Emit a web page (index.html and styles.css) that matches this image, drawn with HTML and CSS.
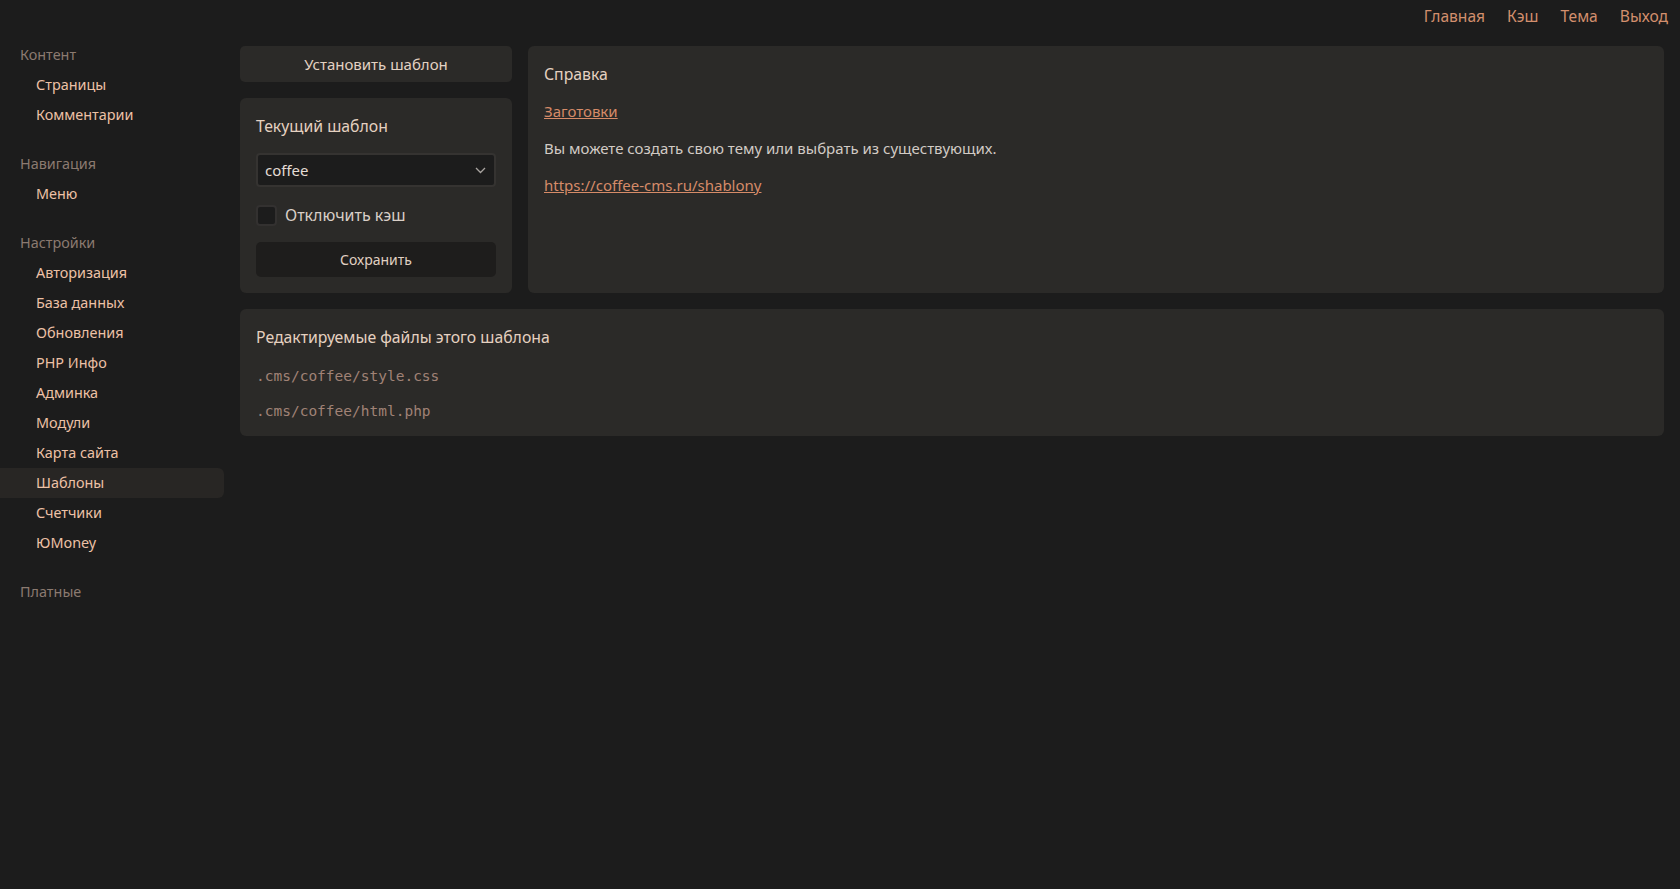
FILE: index.html
```html
<!DOCTYPE html>
<html>
<head>
  <meta charset="utf-8">
  <title>Шаблоны</title>
  <link rel="stylesheet" href="styles.css">
</head>
<body>

  <div class="topbar">
    <a href="#">Главная</a>
    <a href="#">Кэш</a>
    <a href="#">Тема</a>
    <a href="#">Выход</a>
  </div>

  <div class="layout">
    <div class="sidebar">
      <div class="side-group">
        <div class="side-title">Контент</div>
        <a class="side-link" href="#">Страницы</a>
        <a class="side-link" href="#">Комментарии</a>
      </div>
      <div class="side-group">
        <div class="side-title">Навигация</div>
        <a class="side-link" href="#">Меню</a>
      </div>
      <div class="side-group">
        <div class="side-title">Настройки</div>
        <a class="side-link" href="#">Авторизация</a>
        <a class="side-link" href="#">База данных</a>
        <a class="side-link" href="#">Обновления</a>
        <a class="side-link" href="#">PHP Инфо</a>
        <a class="side-link" href="#">Админка</a>
        <a class="side-link" href="#">Модули</a>
        <a class="side-link" href="#">Карта сайта</a>
        <a class="side-link active" href="#">Шаблоны</a>
        <a class="side-link" href="#">Счетчики</a>
        <a class="side-link" href="#">ЮMoney</a>
      </div>
      <div class="side-group">
        <div class="side-title">Платные</div>
      </div>
    </div>

    <div class="content">
      <div class="top-row">
        <div class="left-col">
          <button class="btn btn-install">Установить шаблон</button>
          <div class="card">
            <div class="card-title">Текущий шаблон</div>
            <div class="select-wrap">
              <select class="select">
                <option>coffee</option>
              </select>
              <svg class="chevron" width="11" height="7" viewBox="0 0 11 7">
                <path d="M1 1 L5.5 5.5 L10 1" fill="none" stroke="#a9a4a0" stroke-width="1.3"/>
              </svg>
            </div>
            <label class="check">
              <input type="checkbox">
              <span>Отключить кэш</span>
            </label>
            <button class="btn btn-save">Сохранить</button>
          </div>
        </div>

        <div class="card">
          <div class="card-title">Справка</div>
          <p><a class="link" href="#">Заготовки</a></p>
          <p>Вы можете создать свою тему или выбрать из существующих.</p>
          <p><a class="link" href="#">https://coffee-cms.ru/shablony</a></p>
        </div>
      </div>

      <div class="card files">
        <div class="card-title">Редактируемые файлы этого шаблона</div>
        <div class="file">.cms/coffee/style.css</div>
        <div class="file">.cms/coffee/html.php</div>
      </div>
    </div>
  </div>

</body>
</html>
```

FILE: styles.css
```css
body {
  font-family: "Noto Sans", "Open Sans", sans-serif;
  font-size: 15px;
  background-color: #1c1c1c;
  color: #d2cbc5;
  margin: 0;
}

/* верхнее меню */
.topbar {
  height: 32px;
  display: flex;
  justify-content: flex-end;
  align-items: center;
  gap: 22px;
  padding-right: 12px;
}

.topbar a {
  color: #d38f6d;
  text-decoration: none;
  font-size: 15.6px;
}

.layout {
  display: grid;
  grid-template-columns: 224px 1fr;
  gap: 16px;
  padding-right: 16px;
}

/* боковое меню */
.sidebar {
  padding-top: 8px;
}

.side-group {
  margin-bottom: 19px;
}

.side-title,
.side-link {
  display: block;
  height: 30px;
  line-height: 30px;
  font-size: 14.4px;
}

.side-title {
  padding-left: 20px;
  color: #8b7a70;
}

.side-link {
  padding-left: 36px;
  color: #edc1a6;
  text-decoration: none;
  border-radius: 0 6px 6px 0;
}

.side-link.active {
  background-color: #282624;
}

/* контент */
.content {
  padding-top: 14px;
}

.top-row {
  display: grid;
  grid-template-columns: 272px 1fr;
  gap: 16px;
}

.left-col {
  display: flex;
  flex-direction: column;
  gap: 16px;
}

.card {
  background-color: #2b2a28;
  border-radius: 6px;
  padding: 16px;
}

.card-title {
  font-size: 15.8px;
  line-height: 24px;
  color: #e5d1c0;
}

.card p {
  margin: 13px 0 0;
  line-height: 24px;
}

.link {
  color: #d68b68;
}

.btn {
  font-family: inherit;
  font-size: 15px;
  border: none;
  border-radius: 5px;
  cursor: pointer;
}

.btn-install {
  height: 36px;
  background-color: #2b2a28;
  color: #e3d2c3;
}

.btn-save {
  display: block;
  width: 100%;
  height: 35px;
  margin-top: 15px;
  background-color: #1e1d1c;
  color: #e0d0c2;
  font-size: 14px;
}

.select-wrap {
  position: relative;
  margin-top: 15px;
}

.select {
  appearance: none;
  width: 100%;
  height: 34px;
  padding: 0 7px;
  font-family: inherit;
  font-size: 15px;
  color: #e4dcd5;
  background-color: #1c1c1c;
  border: 2px solid #353331;
  border-radius: 4px;
}

.chevron {
  position: absolute;
  right: 10px;
  top: 14px;
  pointer-events: none;
}

.check {
  display: flex;
  align-items: center;
  gap: 8px;
  margin-top: 16px;
  height: 24px;
  color: #d9cfc7;
  font-size: 16px;
}

.check input {
  appearance: none;
  margin: 0;
  width: 21px;
  height: 21px;
  background-color: #1c1c1c;
  border: 2px solid #333130;
  border-radius: 4px;
}

.files {
  margin-top: 16px;
  padding-bottom: 14px;
}

.files .card-title {
  margin-bottom: 16px;
}

.file {
  font-family: "DejaVu Sans Mono", monospace;
  font-size: 14.5px;
  line-height: 22px;
  color: #a08276;
  margin-bottom: 13px;
}

.file:last-child {
  margin-bottom: 0;
}
```
